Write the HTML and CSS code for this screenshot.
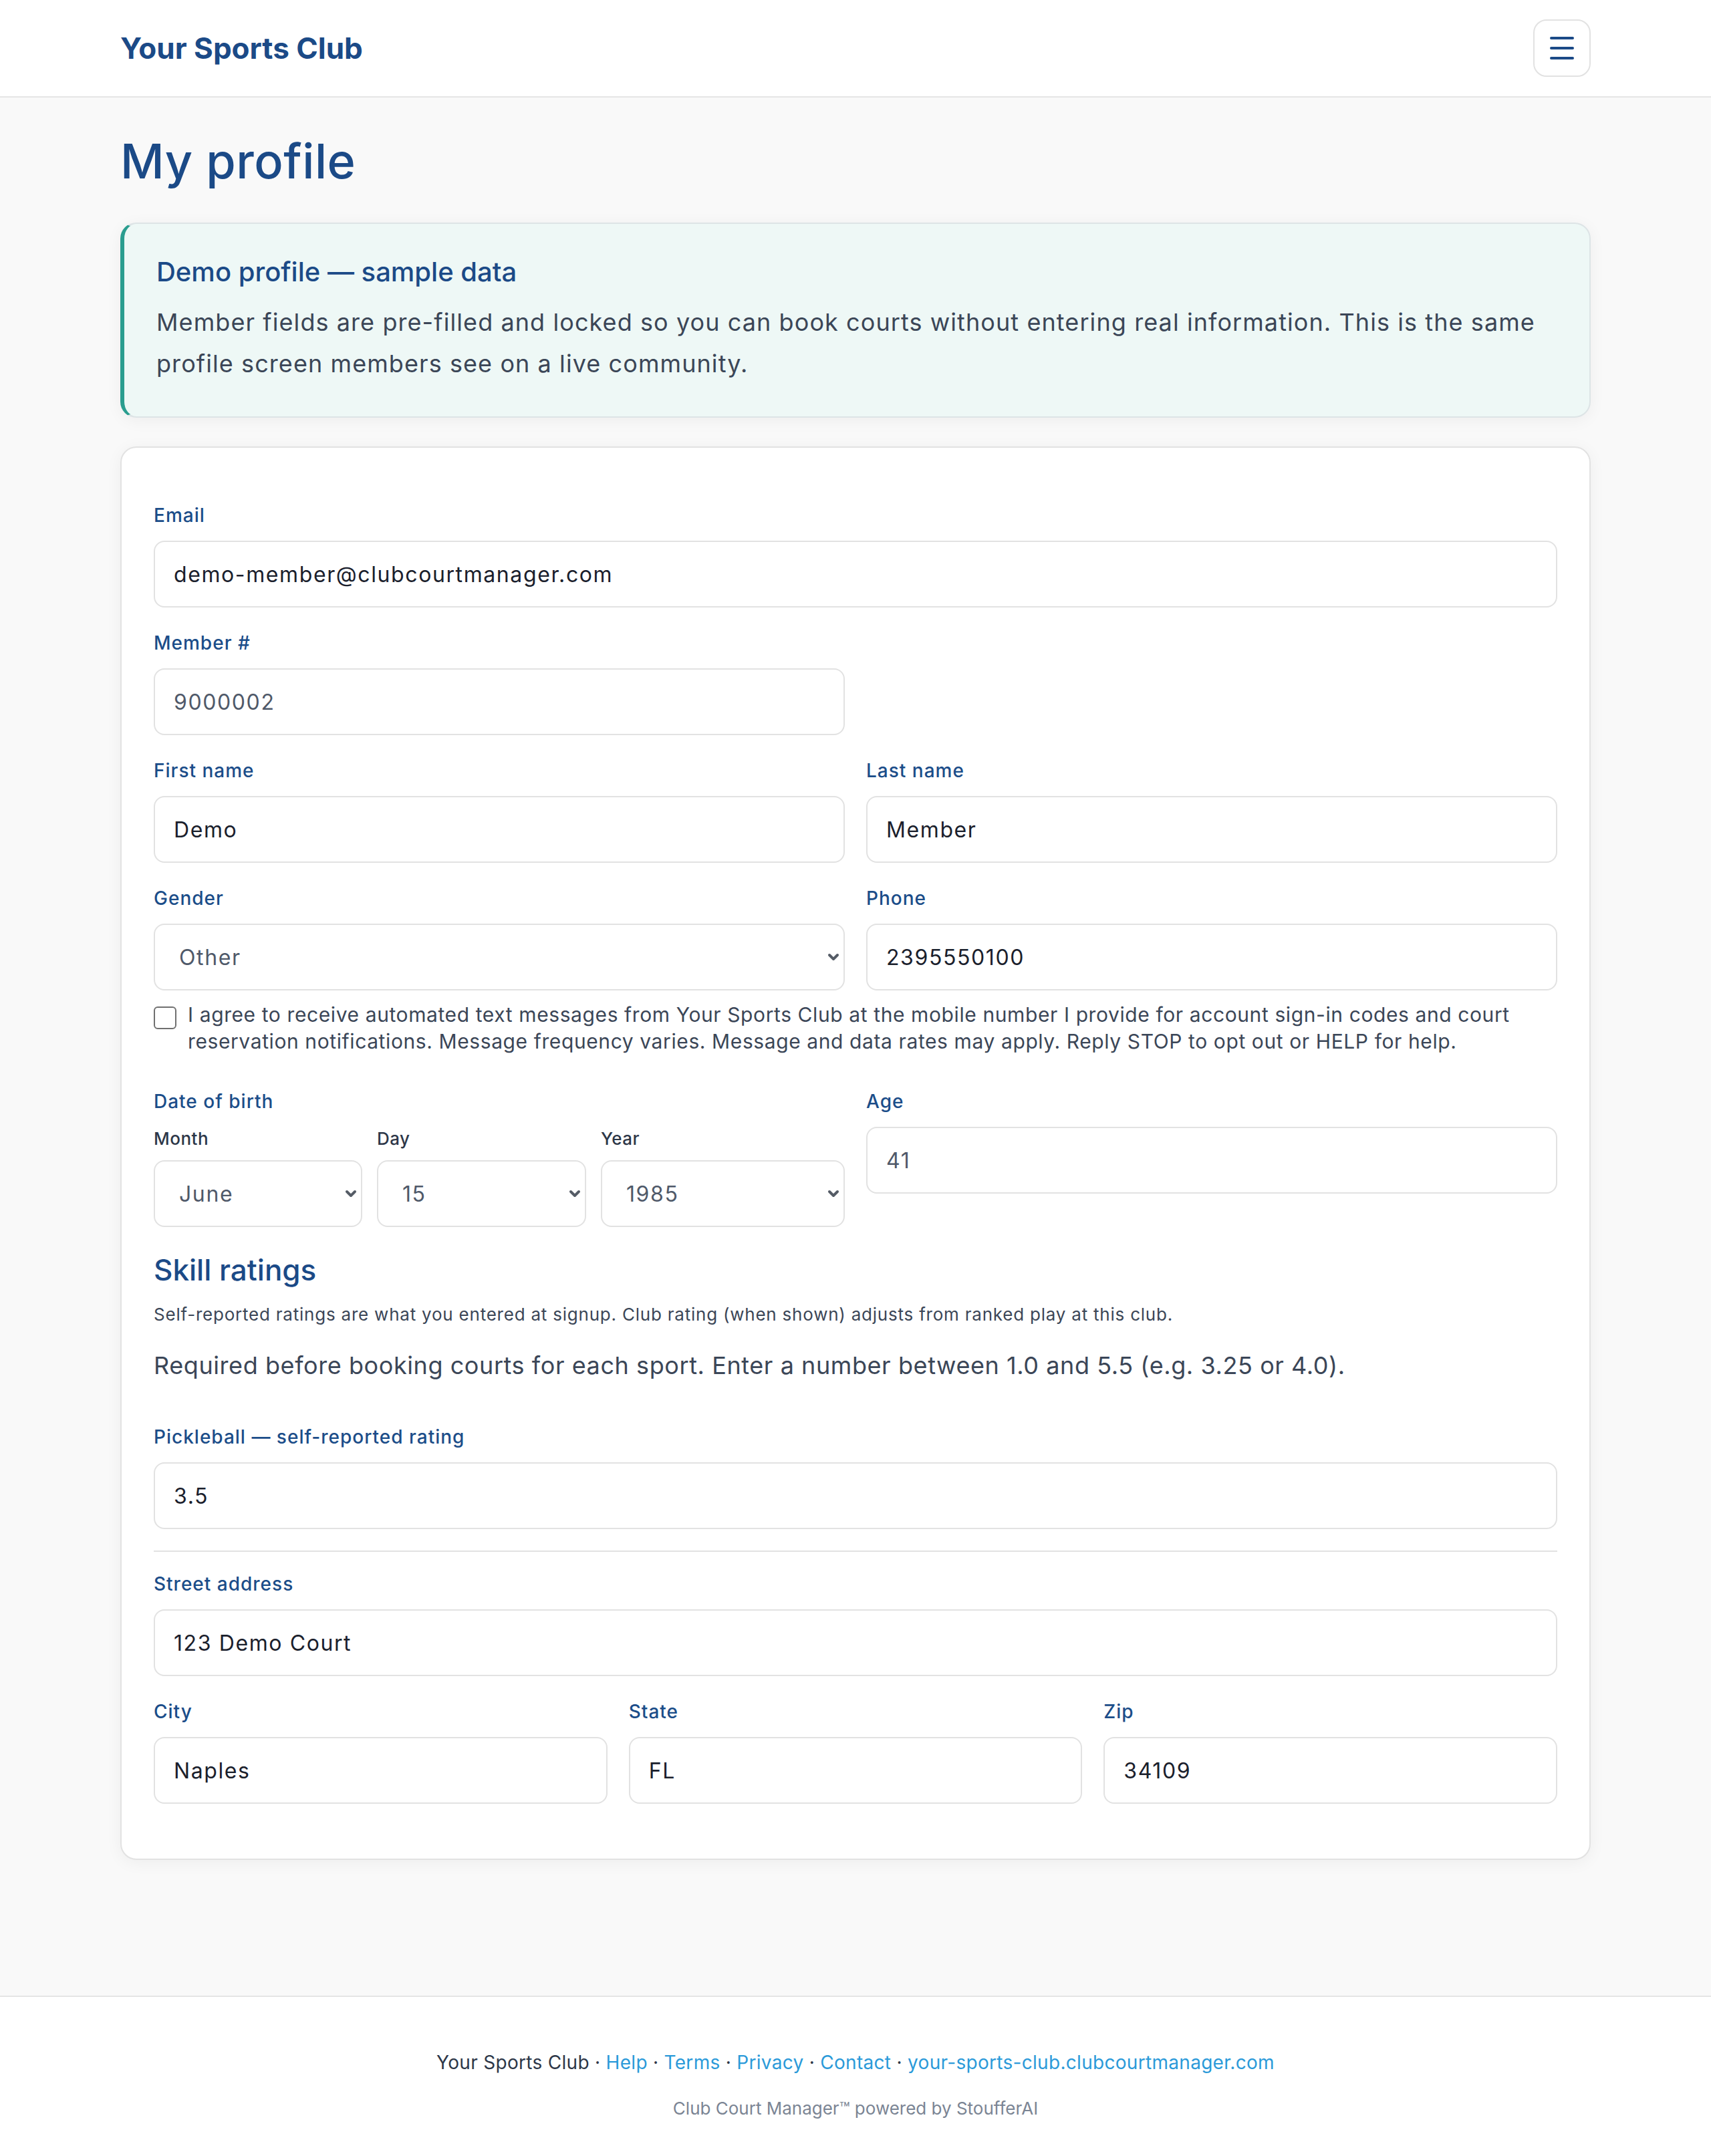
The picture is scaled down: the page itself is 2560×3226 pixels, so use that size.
FILE: index.html
```html
<!DOCTYPE html>
<html lang="en">
<head>
  <meta charset="UTF-8" />
  <meta name="viewport" content="width=device-width, initial-scale=1.0"/>
  <title>My profile – Your Sports Club</title>
  <link rel="stylesheet" href="styles.css">
</head>
<body>
  <header class="topbar">
    <div class="wrap topbar-inner">
      <a class="brand" href="#">Your Sports Club</a>
      <button class="menu-btn" type="button" aria-label="Open menu">
        <svg width="36" height="34" viewBox="0 0 36 34" fill="none" stroke="#1b4a87" stroke-width="4" stroke-linecap="round">
          <line x1="2" y1="2" x2="34" y2="2"/>
          <line x1="2" y1="17" x2="34" y2="17"/>
          <line x1="2" y1="32" x2="34" y2="32"/>
        </svg>
      </button>
    </div>
  </header>

  <main class="page">
    <div class="wrap">
      <h1 class="page-title">My profile</h1>

      <div class="notice">
        <h2 class="notice-title">Demo profile — sample data</h2>
        <p>Member fields are pre-filled and locked so you can book courts without entering real information. This is the same profile screen members see on a live community.</p>
      </div>

      <form class="card" onsubmit="return false;">
        <div class="field">
          <label class="label" for="email">Email</label>
          <input class="input" type="email" id="email" value="demo-member@clubcourtmanager.com" readonly>
        </div>

        <div class="row">
          <div class="field">
            <label class="label" for="member">Member #</label>
            <input class="input locked" type="text" id="member" value="9000002" readonly>
          </div>
        </div>

        <div class="row">
          <div class="field">
            <label class="label" for="first">First name</label>
            <input class="input" type="text" id="first" value="Demo" readonly>
          </div>
          <div class="field">
            <label class="label" for="last">Last name</label>
            <input class="input" type="text" id="last" value="Member" readonly>
          </div>
        </div>

        <div class="row">
          <div class="field snug">
            <label class="label" for="gender">Gender</label>
            <div class="select-wrap">
              <select class="input locked" id="gender" disabled>
                <option>Male</option>
                <option>Female</option>
                <option selected>Other</option>
              </select>
              <svg class="chevron" width="18" height="12" viewBox="0 0 18 12"><path d="M3 3l6 6 6-6"/></svg>
            </div>
          </div>
          <div class="field snug">
            <label class="label" for="phone">Phone</label>
            <input class="input" type="tel" id="phone" value="2395550100" readonly>
          </div>
        </div>

        <label class="consent">
          <input type="checkbox">
          <span>I agree to receive automated text messages from Your Sports Club at the mobile number I provide for account sign-in codes and court reservation notifications. Message frequency varies. Message and data rates may apply. Reply STOP to opt out or HELP for help.</span>
        </label>

        <div class="row">
          <div class="field">
            <span class="label">Date of birth</span>
            <div class="dob">
              <div>
                <label class="sublabel" for="month">Month</label>
                <div class="select-wrap">
                  <select class="input locked" id="month" disabled><option>June</option></select>
                  <svg class="chevron" width="18" height="12" viewBox="0 0 18 12"><path d="M3 3l6 6 6-6"/></svg>
                </div>
              </div>
              <div>
                <label class="sublabel" for="day">Day</label>
                <div class="select-wrap">
                  <select class="input locked" id="day" disabled><option>15</option></select>
                  <svg class="chevron" width="18" height="12" viewBox="0 0 18 12"><path d="M3 3l6 6 6-6"/></svg>
                </div>
              </div>
              <div>
                <label class="sublabel" for="year">Year</label>
                <div class="select-wrap">
                  <select class="input locked" id="year" disabled><option>1985</option></select>
                  <svg class="chevron" width="18" height="12" viewBox="0 0 18 12"><path d="M3 3l6 6 6-6"/></svg>
                </div>
              </div>
            </div>
          </div>
          <div class="field">
            <label class="label" for="age">Age</label>
            <input class="input locked" type="text" id="age" value="41" readonly>
          </div>
        </div>

        <h3 class="section-title">Skill ratings</h3>
        <p class="hint">Self-reported ratings are what you entered at signup. Club rating (when shown) adjusts from ranked play at this club.</p>
        <p class="lead">Required before booking courts for each sport. Enter a number between 1.0 and 5.5 (e.g. 3.25 or 4.0).</p>

        <div class="field">
          <label class="label" for="pickleball">Pickleball — self-reported rating</label>
          <input class="input" type="text" id="pickleball" value="3.5" readonly>
        </div>

        <hr class="divider">

        <div class="field">
          <label class="label" for="street">Street address</label>
          <input class="input" type="text" id="street" value="123 Demo Court" readonly>
        </div>

        <div class="row row-3">
          <div class="field">
            <label class="label" for="city">City</label>
            <input class="input" type="text" id="city" value="Naples" readonly>
          </div>
          <div class="field">
            <label class="label" for="state">State</label>
            <input class="input" type="text" id="state" value="FL" readonly>
          </div>
          <div class="field">
            <label class="label" for="zip">Zip</label>
            <input class="input" type="text" id="zip" value="34109" readonly>
          </div>
        </div>
      </form>
    </div>
  </main>

  <footer class="site-footer">
    <p class="footer-links">Your Sports Club · <a href="#">Help</a> · <a href="#">Terms</a> · <a href="#">Privacy</a> · <a href="#">Contact</a> · <a href="#">your-sports-club.clubcourtmanager.com</a></p>
    <p class="footer-credit">Club Court Manager™ powered by StoufferAI</p>
  </footer>
</body>
</html>
```

FILE: styles.css
```css
* {
  box-sizing: border-box;
}
html, body {
  margin: 0;
  padding: 0;
}
body {
  font-family: Inter, "Open Sans", sans-serif;
  color: #3b4657;
  background: #fff;
}
.wrap {
  max-width: 2200px;
  margin: 0 auto;
}

/* top bar */
.topbar {
  background: #fff;
  border-bottom: 2px solid #e5e5e5;
}
.topbar-inner {
  height: 144px;
  display: flex;
  align-items: center;
  justify-content: space-between;
}
.brand {
  font-size: 44px;
  font-weight: 700;
  color: #1b4a87;
  text-decoration: none;
}
.menu-btn {
  width: 86px;
  height: 86px;
  padding: 0;
  display: flex;
  align-items: center;
  justify-content: center;
  background: #fff;
  border: 2px solid #e2e2e2;
  border-radius: 20px;
}

/* page body */
.page {
  background: #f9f9f9;
  padding: 52px 0 203px;
}
.page-title {
  margin: 0 0 49px;
  font-size: 72px;
  font-weight: 500;
  line-height: 1.2;
  letter-spacing: 0.5px;
  color: #1b4a87;
}
.notice {
  background: #eef8f6;
  border: 2px solid #dde4e6;
  border-left: 6px solid #2a9d8f;
  border-radius: 24px;
  padding: 48px;
  box-shadow: 0 4px 24px rgba(0, 0, 0, 0.05);
}
.notice-title {
  margin: 0 0 20px;
  font-size: 40px;
  line-height: 48px;
  font-weight: 500;
  color: #1b4a87;
}
.notice p {
  margin: 0;
  font-size: 36px;
  line-height: 62px;
  letter-spacing: 0.03em;
}

/* profile form */
.card {
  margin-top: 43px;
  background: #fff;
  border: 2px solid #e2e2e2;
  border-radius: 24px;
  padding: 80px 48px 50px;
  box-shadow: 0 4px 24px rgba(0, 0, 0, 0.05);
}
.row {
  display: grid;
  grid-template-columns: 1fr 1fr;
  column-gap: 32px;
}
.row-3 {
  grid-template-columns: repeat(3, 1fr);
}
.field {
  margin-bottom: 32px;
}
.field.snug {
  margin-bottom: 16px;
}
.label {
  display: block;
  margin-bottom: 16px;
  font-size: 28px;
  line-height: 43px;
  font-weight: 500;
  letter-spacing: 1px;
  color: #1b4d89;
}
.sublabel {
  display: block;
  margin-bottom: 14px;
  font-size: 26px;
  line-height: 36px;
  font-weight: 500;
  letter-spacing: 0.5px;
  color: #2d3748;
}
.input {
  display: block;
  width: 100%;
  height: 100px;
  padding: 0 28px;
  font: inherit;
  font-size: 32px;
  letter-spacing: 0.05em;
  color: #1a202c;
  background: #fff;
  border: 2px solid #e2e2e2;
  border-radius: 16px;
  outline: none;
}
.input.locked {
  color: #4f5969;
}
select.input {
  appearance: none;
  -webkit-appearance: none;
  padding: 0 40px 0 36px;
  opacity: 1;
}
.select-wrap {
  position: relative;
}
.chevron {
  position: absolute;
  right: 8px;
  top: 50%;
  margin-top: -6px;
  pointer-events: none;
  fill: none;
  stroke: #555c66;
  stroke-width: 4;
  stroke-linecap: round;
  stroke-linejoin: round;
}
.dob {
  display: grid;
  grid-template-columns: 312fr 313fr 365fr;
  column-gap: 22px;
}

.consent {
  display: flex;
  align-items: flex-start;
  gap: 17px;
  margin-bottom: 49px;
  font-size: 30px;
  line-height: 40px;
  letter-spacing: 0.02em;
}
.consent input {
  appearance: none;
  -webkit-appearance: none;
  flex: none;
  width: 34px;
  height: 34px;
  margin: 8px 0 0;
  background: #fff;
  border: 2px solid #707070;
  border-radius: 6px;
}

.section-title {
  margin: 4px 0 18px;
  font-size: 44px;
  line-height: 57px;
  font-weight: 500;
  color: #1b4a87;
}
.hint {
  margin: 0 0 31px;
  font-size: 26px;
  line-height: 39px;
  letter-spacing: 0.03em;
}
.lead {
  margin: 0 0 60px;
  font-size: 36px;
  line-height: 52px;
  letter-spacing: 0.016em;
}
.divider {
  margin: 0 0 27px;
  border: none;
  border-top: 2px solid #e2e2e2;
}

/* footer */
.site-footer {
  background: #fff;
  border-top: 2px solid #e5e5e5;
  text-align: center;
  padding: 77px 0 53px;
}
.footer-links {
  margin: 0 0 30px;
  font-size: 28px;
  line-height: 42px;
  letter-spacing: 0.3px;
  color: #2d3748;
}
.footer-links a {
  color: #2b9ad9;
  text-decoration: none;
}
.footer-credit {
  margin: 0;
  font-size: 26px;
  line-height: 36px;
  color: #7b8594;
}
```
